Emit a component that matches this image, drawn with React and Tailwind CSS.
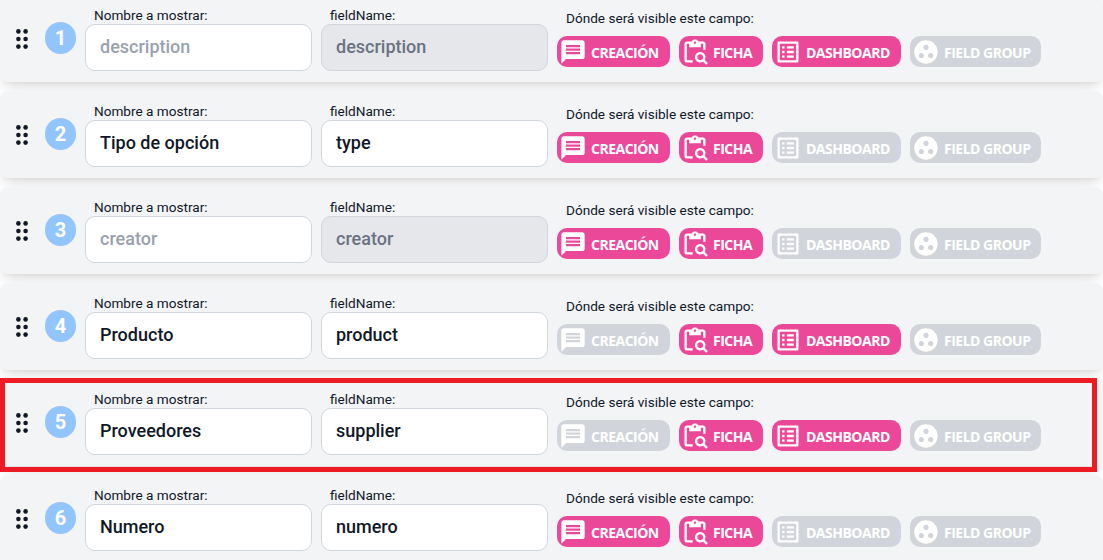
import React from 'react';
import { MdMessage, MdContentPasteSearch, MdOutlineListAlt } from 'react-icons/md';

const fields = [
    { label: 'description', name: 'description', placeholder: true, on: [1, 1, 1, 0] },
    { label: 'Tipo de opción', name: 'type', on: [1, 1, 0, 0] },
    { label: 'creator', name: 'creator', placeholder: true, on: [1, 1, 0, 0] },
    { label: 'Producto', name: 'product', on: [0, 1, 1, 0] },
    { label: 'Proveedores', name: 'supplier', on: [0, 1, 1, 0] },
    { label: 'Numero', name: 'numero', on: [1, 1, 0, 0] },
];

const GroupIcon = ({ active }) => (
    <svg viewBox="0 0 24 24" className="w-[28px] h-[28px]">
        <circle cx="12" cy="12" r="10" fill="#ffffff" />
        <g className={active ? 'fill-[#ec4899]' : 'fill-[#d1d5db]'}>
            <circle cx="12" cy="8" r="2.2" />
            <circle cx="8" cy="15" r="2.2" />
            <circle cx="16" cy="15" r="2.2" />
        </g>
    </svg>
);

const targets = [
    { text: 'CREACIÓN', width: 'w-[113px]', Icon: MdMessage },
    { text: 'FICHA', width: 'w-[84px]', Icon: MdContentPasteSearch },
    { text: 'DASHBOARD', width: 'w-[129px]', Icon: MdOutlineListAlt },
    { text: 'FIELD GROUP', width: 'w-[131px]', Icon: GroupIcon },
];

const Target = ({ target, active }) => {
    const { Icon } = target;
    return (
        <div
            className={`${target.width} h-[31px] rounded-[10px] flex items-center gap-[4px] pl-[2px] text-white text-[14px] font-bold tracking-[-0.5px] font-['Open_Sans',sans-serif] ${active ? 'bg-[#ec4899]' : 'bg-[#d1d5db]'}`}
        >
            {Icon === GroupIcon ? <Icon active={active} /> : <Icon size={28} color="#ffffff" />}
            <span className="whitespace-nowrap pt-[1px]">{target.text}</span>
        </div>
    );
};

const FieldInput = ({ title, value, placeholder, disabled }) => (
    <div className="w-[227px]">
        <div className="h-[17px] pl-[9px] text-[13.6px] leading-[16px] text-gray-900">{title}</div>
        <input
            readOnly
            disabled={disabled}
            value={placeholder ? '' : value}
            placeholder={placeholder ? value : undefined}
            className={`w-full h-[47px] rounded-[10px] border border-gray-300 px-[14px] pb-[2px] text-[18px] font-medium outline-none ${disabled ? 'bg-gray-200 text-gray-500' : 'bg-white text-gray-900 placeholder:text-gray-400'}`}
        />
    </div>
);

const Row = ({ field, index }) => (
    <div className="flex h-[87px] mb-[9px] pl-[16px] rounded-lg bg-gray-100 shadow-lg font-['Roboto',sans-serif]">
        <svg viewBox="0 0 12 20" className="w-[12px] h-[20px] mt-[34px] shrink-0 fill-gray-900">
            <circle cx="2.4" cy="2.4" r="2.3" />
            <circle cx="9.6" cy="2.4" r="2.3" />
            <circle cx="2.4" cy="10" r="2.3" />
            <circle cx="9.6" cy="10" r="2.3" />
            <circle cx="2.4" cy="17.6" r="2.3" />
            <circle cx="9.6" cy="17.6" r="2.3" />
        </svg>
        <div className="w-[31px] h-[32px] ml-[17px] mt-[27px] shrink-0 rounded-full bg-[#93c5fd] flex items-center justify-center text-white text-[20px] font-bold pb-[1px]">
            {index + 1}
        </div>
        <div className="flex gap-[9px] ml-[9px] pt-[12px]">
            <FieldInput title="Nombre a mostrar:" value={field.label} placeholder={field.placeholder} />
            <FieldInput title="fieldName:" value={field.name} disabled={field.placeholder} />
        </div>
        <div className="ml-[9px] pt-[15px]">
            <div className="h-[26px] pl-[9px] text-[13.6px] leading-[16px] text-gray-900">Dónde será visible este campo:</div>
            <div className="flex gap-[9px]">
                {targets.map((target, i) => (
                    <Target key={target.text} target={target} active={field.on[i] === 1} />
                ))}
            </div>
        </div>
    </div>
);

export default function App() {
    return (
        <div className="relative h-[560px] overflow-hidden bg-white">
            <div className="-mt-[5px]">
                {fields.map((field, i) => (
                    <Row key={field.name} field={field} index={i} />
                ))}
            </div>
            <div className="absolute left-0 top-[378px] w-[1097px] h-[94px] border-[5px] border-[#ed1c24]" />
        </div>
    );
}
